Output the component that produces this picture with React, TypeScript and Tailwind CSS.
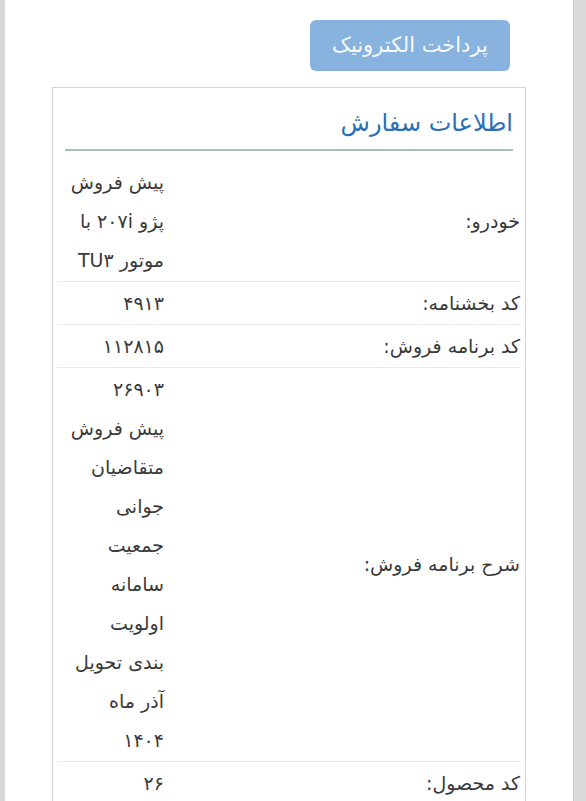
const rows: { label: string; value: string[] }[] = [
  { label: 'خودرو:', value: ['پیش فروش', 'پژو ۲۰۷i با', 'موتور TU۳'] },
  { label: 'کد بخشنامه:', value: ['۴۹۱۳'] },
  { label: 'کد برنامه فروش:', value: ['۱۱۲۸۱۵'] },
  {
    label: 'شرح برنامه فروش:',
    value: [
      '۲۶۹۰۳',
      'پیش فروش',
      'متقاضیان',
      'جوانی',
      'جمعیت',
      'سامانه',
      'اولویت',
      'بندی تحویل',
      'آذر ماه',
      '۱۴۰۴',
    ],
  },
  { label: 'کد محصول:', value: ['۲۶'] },
]

export default function App() {
  return (
    <div
      className="min-h-screen flex bg-white text-[#3a3a3a]"
      style={{ fontFamily: '"DejaVu Sans", "Noto Sans", sans-serif' }}
    >
      <div className="w-[5px] shrink-0 bg-[#d7d7d7]" />

      <div dir="rtl" className="flex-1 px-[47px] pt-5">
        <div className="flex pr-4 mb-4">
          <button
            disabled
            className="w-[200px] h-[51px] rounded-[6px] bg-[#88b3de] text-white/95 text-[21px]"
          >
            پرداخت الکترونیک
          </button>
        </div>

        <div className="border border-[#d4d4d4] px-[4px] pt-[17px]">
          <div className="mx-[8px] pb-[8px] border-b-2 border-[#a7bcbc]">
            <h2 className="text-[24px] leading-[36px] text-[#2a6fb5]">اطلاعات سفارش</h2>
          </div>

          <table className="w-full mt-[10px] text-[19px] leading-[39px]">
            <tbody>
              {rows.map((row, i) => (
                <tr key={row.label} className={i > 0 ? 'border-t border-[#ececec]' : ''}>
                  <td className="text-right align-middle pr-[1px] py-[1.5px]">{row.label}</td>
                  <td className="w-[109px] text-right align-middle pl-[6px] pr-[2px] py-[1.5px]">
                    {row.value.map((line) => (
                      <div key={line} className="whitespace-nowrap">{line}</div>
                    ))}
                  </td>
                </tr>
              ))}
            </tbody>
          </table>
        </div>
      </div>

      <div className="w-[13px] shrink-0 bg-[#dadada] border-l border-[#cfcfcf]" />
    </div>
  )
}
